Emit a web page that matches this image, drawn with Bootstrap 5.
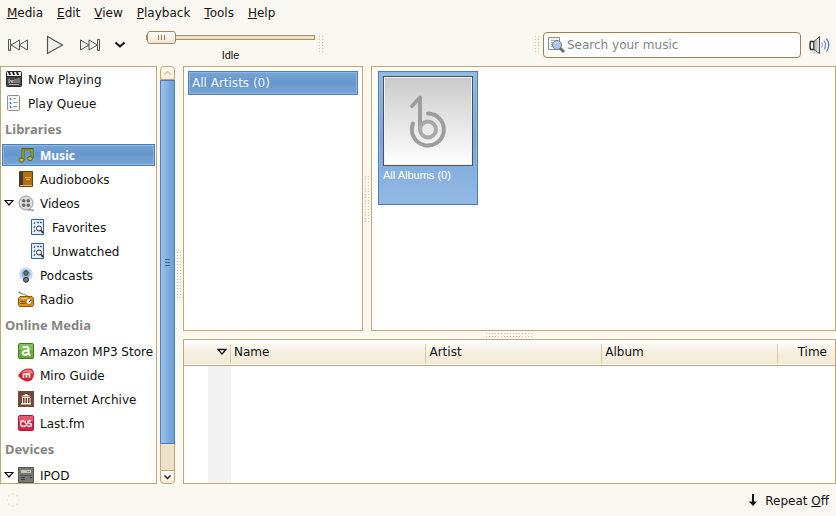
<!DOCTYPE html>
<html lang="en">
<head>
<meta charset="utf-8">
<meta name="viewport" content="width=device-width, initial-scale=1">
<title>Music</title>
<link href="https://cdn.jsdelivr.net/npm/bootstrap@5.3.0/dist/css/bootstrap.min.css" rel="stylesheet">
<style>
:root{--edge:#c0a870;--blue:#4a7fb8;--sel:linear-gradient(#7aa5d6,#6496cc 45%,#7aa5d6)}
body{font:12px/18px "DejaVu Sans","Noto Sans",sans-serif;background:#fbf8f1;color:#111}
svg{display:block;flex:none}
button,.src{border:0;background:none;padding:0;color:inherit;text-decoration:none;font:inherit}
.menus{height:26px;gap:14px;padding-left:7px}
.tools{height:40px;padding-right:6px}
.transport{gap:13px;padding-left:7px;height:38px}
.seekbox{width:173px;padding-top:5px}
.seek{appearance:none;width:100%;height:13px;background:none;margin:0;display:block}
.seek::-webkit-slider-runnable-track{height:5px;border:1px solid #a8925c;background:#ede3cb}
.seek::-webkit-slider-thumb{appearance:none;width:29px;height:13px;margin-top:-5px;border:1px solid #a08c5c;border-radius:3px;background:linear-gradient(90deg,#8a7a50 1px,transparent 1px 3px,#8a7a50 3px 4px,transparent 4px 6px,#8a7a50 6px 7px) center/7px 5px no-repeat,linear-gradient(#fff,#f0e8d3)}
.tiny{font:11px/14px "Liberation Sans",Arial,sans-serif}
.dots{background:conic-gradient(from 270deg at 1px 1px,#d2c299 90deg,transparent 0) 0 0/3px 3px;flex:none}
.dots-v{width:5px;height:46px}
.dots-s{width:4px;height:17px;margin-top:10px}
.dots-h{width:47px;height:4px}
.find{width:258px;height:26px;border:1px solid #9c8350;border-radius:4px;background:#fff;padding:0 3px;gap:2px;margin-top:6px}
.find input{border:0;outline:0;background:none;padding:0;min-width:0;height:24px;flex:1}
.find input::placeholder{color:#858585;opacity:1}
.vol{margin:9px 0 0 8px}
.pane{border:1px solid var(--edge);background:#fff}
.side{width:157px;flex:none}
.src{display:flex;align-items:center;height:24px;padding-left:5px;gap:6px;white-space:nowrap}
.src span,.status span{padding-top:2px}
.lv1{padding-left:17px}
.lv2{padding-left:29px}
.parent{padding-left:3px;gap:4px}
.parent span{padding-left:2px}
.group-title{font:700 13px/28px "Noto Sans","Open Sans",sans-serif;color:#85857f;padding-left:4px;margin:0}
.chosen{background:var(--sel);border:1px solid var(--blue);box-shadow:inset 0 0 0 1px #8fb6e0;color:#fff}
.src.chosen{height:22px;margin:1px;padding-left:15px;font-family:"Noto Sans","Open Sans",sans-serif;font-weight:700}
.sbar{width:15px;margin-left:3px;flex:none}
.sbar button{height:14px;border:1px solid var(--edge);background:linear-gradient(#fff,#f4edda);display:grid;place-items:center}
.sbar .up{border-radius:4px 4px 0 0}
.sbar .down{border-radius:0 0 4px 4px}
.slab{flex:364 0 0;border:1px solid var(--blue);background:linear-gradient(90deg,#9dc2ea,#7ba8da 70%,#6f9fd6);display:grid;place-items:center}
.slab i{width:5px;height:7px;background:linear-gradient(#3f6694 1px,transparent 1px 3px,#3f6694 3px 4px,transparent 4px 6px,#3f6694 6px)}
.trough{flex:26 0 0;background:#ece2ca;border:solid var(--edge);border-width:0 1px}
.gut-v{width:8px;flex:none}
.gut-h{height:8px;flex:none}
.artists{flex:0 0 180px;padding:4px}
.artist{height:24px;padding:0 3px;color:#f0f5fb}
.albums{padding:4px 6px}
.album{width:100px;height:134px;padding:4px;background:linear-gradient(#94b9e5,#78a6d9 50%,#94b9e5)}
.album .tiny{padding-top:2px}
.cover{border:1px solid #505050;box-shadow:inset 0 0 0 1px #f4f4f4;width:90px;height:90px;background:linear-gradient(#cacaca,#fff)}
.upper{flex:265 0 0}
.lower{flex:143 0 0}
.tracks{width:100%;height:100%;table-layout:fixed;border-collapse:collapse}
.tracks thead tr{height:25px;background:linear-gradient(#fff,#f5eddc 60%,#f4ecda);border-bottom:1px solid var(--edge)}
.tracks th{font-weight:400;padding:0 3px;background:linear-gradient(#d9cba6,#d9cba6) right 4px/1px 19px no-repeat}
.tracks th.plain{background:none}
.tracks th.sort{padding:0 0 0 9px}
.tracks td{padding:0}
.c-a{width:24px}.c-b{width:23px}.c-m{width:27%}.c-t{width:57px}
.mark-col{background:#f2f2f2}
.status{height:32px;padding:0 7px 0 5px}
</style>
<script src="https://cdn.jsdelivr.net/npm/bootstrap@5.3.0/dist/js/bootstrap.bundle.min.js"></script>
</head>
<body class="vh-100 d-flex flex-column overflow-hidden">
<nav class="menus d-flex align-items-center flex-shrink-0" aria-label="Main menu">
<button><u>M</u>edia</button><button><u>E</u>dit</button><button><u>V</u>iew</button><button><u>P</u>layback</button><button><u>T</u>ools</button><button><u>H</u>elp</button>
</nav>
<header class="tools d-flex align-items-start flex-shrink-0">
<div class="transport d-flex align-items-center">
<button aria-label="Previous"><svg width="22" height="16" fill="#f6f5f1" stroke="#505550"><path d="M1.500 2.500h2v11h-2zM12.500 3v10L4 8zM20.500 3v10L12 8z"/></svg></button>
<button aria-label="Play"><svg width="24" height="20" fill="#f3f2ee" stroke="#505550" stroke-width="1.200"><path d="M5.500 1.500v17l15-8.500z"/></svg></button>
<button aria-label="Next"><svg width="22" height="16" fill="#f6f5f1" stroke="#505550"><path d="M18.500 2.500h2v11h-2zM1.500 3v10L10 8zM10 3v10L18.500 8z"/></svg></button>
<button aria-label="Next options"><svg width="12" height="8" fill="none" stroke="#111" stroke-width="2"><path d="M1.500 1.500L6 5.500l4.500-4"/></svg></button>
</div>
<div class="seekbox ms-3 me-1 ps-1">
<input class="seek" id="seek" type="range" min="0" max="100" value="0">
<label class="tiny d-block text-center pt-1" for="seek">Idle</label>
</div>
<div class="dots dots-s"></div>
<div class="dots dots-s ms-auto me-1"></div>
<div class="find d-flex align-items-center">
<label for="q" aria-label="Search"><svg width="18" height="18"><path d="M1.500 1.500h11v12h-11z" fill="#f1f1ee" stroke="#90918c"/><path d="M4 4.500h6M4 6.500h3M4 8.500h3M4 10.500h3" stroke="#b9bab5"/><circle cx="10" cy="9" r="4.500" fill="#a9c8ec" stroke="#6e7f94"/><path d="M7.500 8q2-3 4-1" stroke="#e4f0fc" fill="none"/><path d="M13 12l4 4" stroke="#70726d" stroke-width="3"/></svg></label>
<input id="q" type="text" aria-label="Search" placeholder="Search your music">
</div>
<button class="vol" aria-label="Volume"><svg width="21" height="20"><ellipse cx="7" cy="17.500" rx="6" ry="1.500" fill="#deddd8"/><path d="M1.500 6.500H5v8H1.500q-1-4 0-8z" fill="#eee" stroke="#303330" stroke-width="1.500"/><path d="M5 6.500L10.500 1.500v17L5 14.500z" fill="#c4c6c2" stroke="#4c504c"/><path d="M9 4v13" stroke="#f2f2f2"/><g fill="none" stroke-width="1.300"><path d="M12.500 7.500q2 2.500 0 5" stroke="#a8b9da"/><path d="M15 5.500q3 4.500 0 9" stroke="#7896ce"/><path d="M17.500 3.500q4.500 6.500 0 13" stroke="#4c78c4"/></g></svg></button>
</header>
<main class="d-flex flex-grow-1 overflow-hidden">
<nav class="side pane overflow-hidden" aria-label="Sources">
<a class="src" href="#"><svg width="16" height="16"><rect x=".5" y=".5" width="15" height="15" rx="1" fill="#444642" stroke="#292a28"/><path d="M1 1h14v4H1z" fill="#efefeb"/><path d="M2 1h2l1 3H3zM6 1h2l1 3H7zM10 1h2l1 3h-2zM1 5h14v1H1z" fill="#222"/><path d="M3 8v4l2-3 1 3 1-3v3m2-4v4m2-4v4m2-5v5M3 13.500h10" fill="none" stroke="#c9cac6" stroke-width=".8"/></svg><span>Now Playing</span></a>
<a class="src" href="#"><svg width="16" height="16"><rect x="1.500" y=".5" width="12" height="15" rx="1" fill="#f3f5f6" stroke="#8b8e89"/><path d="M4 4.500l1-1m-1 5l1-1m-1 5l1-1" stroke="#3d70b0" stroke-width="2"/><path d="M7.500 3.500H10M7.500 7.500h4M7.500 11.500H11" stroke="#8998aa"/></svg><span>Play Queue</span></a>
<h2 class="group-title">Libraries</h2>
<a class="src chosen" href="#" aria-current="page"><svg width="16" height="16"><path d="M5 13V2.500h9V11" fill="none" stroke="#53620f" stroke-width="3"/><path d="M5 13V3h9v8" fill="none" stroke="#a9b944" stroke-width="1.200"/><ellipse cx="3.500" cy="13" rx="2.700" ry="2" fill="#b4c24c" stroke="#53620f"/><ellipse cx="12" cy="11.500" rx="2.500" ry="2" fill="#b4c24c" stroke="#53620f"/></svg><span>Music</span></a>
<a class="src lv1" href="#"><svg width="16" height="16"><path d="M1.500.5h13v15h-13z" fill="#b1700d" stroke="#63400d"/><path d="M1 1h4v14H1z" fill="#42372b"/><path d="M7 6.500h6M8 8.500h4" stroke="#e5ad55"/><path d="M2 14.500h12" stroke="#dcc18a"/></svg><span>Audiobooks</span></a>
<a class="src parent" href="#"><svg width="10" height="8"><path d="M1 1.500h8L5 6z" fill="#fff" stroke="#111" stroke-width="1.200"/></svg><svg width="16" height="16"><circle cx="8" cy="8" r="7" fill="#deded9" stroke="#979994"/><g fill="#686a67"><circle cx="5.700" cy="5.700" r="1.800"/><circle cx="10.300" cy="5.700" r="1.800"/><circle cx="5.700" cy="10.300" r="1.800"/><circle cx="10.300" cy="10.300" r="1.800"/></g><path d="M10 15q4-1 6 1" stroke="#969994" stroke-width="1.500" fill="none"/></svg><span>Videos</span></a>
<a class="src lv2" href="#"><svg width="16" height="16"><path d="M1.500.5h12v15h-12z" fill="#e7f0fa" stroke="#315f9d"/><path d="M4 5l1-2M4 9l1-2M4 13l1-2M7 3.500h2M10 3.500h2" stroke="#3c6eaa" stroke-width="1.300"/><circle cx="9" cy="9.500" r="2.500" fill="#f7f7f7" stroke="#333"/><path d="M11 11.500l2 2.500" stroke="#222" stroke-width="1.500"/></svg><span>Favorites</span></a>
<a class="src lv2" href="#"><svg width="16" height="16"><path d="M1.500.5h12v15h-12z" fill="#e7f0fa" stroke="#315f9d"/><path d="M4 5l1-2M4 9l1-2M4 13l1-2M7 3.500h2M10 3.500h2" stroke="#3c6eaa" stroke-width="1.300"/><circle cx="9" cy="9.500" r="2.500" fill="#f7f7f7" stroke="#333"/><path d="M11 11.500l2 2.500" stroke="#222" stroke-width="1.500"/></svg><span>Unwatched</span></a>
<a class="src lv1" href="#"><svg width="16" height="16"><circle cx="8" cy="7" r="6.800" fill="#c5dbf1"/><circle cx="8" cy="7" r="4.500" fill="#8eb5df"/><circle cx="8" cy="6" r="2.200" fill="#777" stroke="#303336"/><circle cx="8" cy="12.800" r="2.500" fill="#777" stroke="#303336"/></svg><span>Podcasts</span></a>
<a class="src lv1" href="#"><svg width="16" height="16"><path d="M1 1.500l9 3.500" stroke="#81837e"/><circle cx="1.500" cy="1.500" r="1" fill="#777"/><path d="M2 5.500h12l1.500 2v6l-1 2h-13l-1-2v-6z" fill="#dc941f" stroke="#8b5507"/><path d="M3 7.500h10" stroke="#f5d68d"/><path d="M2.500 10.500h5M2.500 12.500h5" stroke="#784909"/><circle cx="11" cy="10.500" r="3" fill="#faf1dc" stroke="#a96c14"/><path d="M11 11l2-2" stroke="#444"/></svg><span>Radio</span></a>
<h2 class="group-title">Online Media</h2>
<a class="src lv1" href="#"><svg width="16" height="16"><rect x=".5" y=".5" width="15" height="15" rx="1.500" fill="#64ad3c" stroke="#3c7e1d"/><path d="M1 1h14v6H1z" fill="#91ca6e" opacity=".6"/><path d="M4.500 4.500q6-2 6 1.500v4q0 2 2 2M10.500 7.500q-6 0-6 2.500 1 3 5 1" fill="none" stroke="#fff" stroke-width="2"/></svg><span>Amazon MP3 Store</span></a>
<a class="src lv1" href="#"><svg width="16" height="16"><path d="M0 9Q4 1 11 1.500q5-.5 5 5.500-.500 8-8 7.500Q3 13 0 9z" fill="#cf2834"/><path d="M3 6q5-5 10-3 2 1 2 4Q8 4 3 6z" fill="#ef777a"/><path d="M5.500 11V7h6v4M8.500 7v4" fill="none" stroke="#fff" stroke-width="1.500"/></svg><span>Miro Guide</span></a>
<a class="src lv1" href="#"><svg width="16" height="16"><path d="M0 0h16v16H0z" fill="#704b38"/><path d="M3 5.500L8 3l5 2.500zM3 12h10v1.500H3z" fill="#f4eee7"/><path d="M4 6.500h8M4.500 7v5M7 7v5M9.500 7v5M12 7v5" stroke="#eee3d8"/></svg><span>Internet Archive</span></a>
<a class="src lv1" href="#"><svg width="16" height="16"><rect x=".5" y=".5" width="15" height="15" rx="1.500" fill="#d52546" stroke="#b91535"/><path d="M1 1h14v5H1z" fill="#e97186" opacity=".7"/><path d="M8 10.500q-1 1-3 1-2.500-.5-2.500-3T5 6q2 0 3 2.500t3 3q2.500 0 2.500-1.500T11.500 8.500t-2-1.200T11.500 6h1.500" fill="none" stroke="#fff" stroke-width="1.300"/></svg><span>Last.fm</span></a>
<h2 class="group-title">Devices</h2>
<a class="src parent" href="#"><svg width="10" height="8"><path d="M1 1.500h8L5 6z" fill="#fff" stroke="#111" stroke-width="1.200"/></svg><svg width="16" height="16"><path d="M.5.500h15v15H.5z" fill="#777974" stroke="#535550"/><path d="M3 3h10v3H3z" fill="#c4caac"/><path d="M9 4.500h3" stroke="#849167"/><path d="M2 8.500h12" stroke="#555"/><path d="M3 10.500h4m5 0h2M3 12.500h4" stroke="#3c3e3b"/></svg><span>IPOD</span></a>
</nav>
<div class="sbar d-flex flex-column">
<button class="up" aria-label="Scroll up"><svg width="9" height="6" fill="none" stroke="#d7c79e" stroke-width="1.500"><path d="M1.500 4.500l3-3 3 3"/></svg></button>
<div class="slab"><i></i></div><div class="trough"></div>
<button class="down" aria-label="Scroll down"><svg width="9" height="6" fill="none" stroke="#222" stroke-width="1.500"><path d="M1.500 1.500l3 3 3-3"/></svg></button>
</div>
<div class="gut-v d-flex align-items-center justify-content-center"><div class="dots dots-v"></div></div>
<div class="d-flex flex-column flex-grow-1 overflow-hidden">
<div class="upper d-flex">
<section class="artists pane" aria-label="Artists"><button class="artist chosen w-100 text-start">All Artists (0)</button></section>
<div class="gut-v d-flex align-items-center justify-content-center"><div class="dots dots-v"></div></div>
<section class="albums pane flex-grow-1" aria-label="Albums">
<button class="album chosen d-flex flex-column align-items-start">
<span class="cover"><svg width="88" height="88" fill="none" stroke-linecap="round" stroke-width="4"><path d="M28 29l8-8.500V52" stroke="#9d9d9d" stroke-linejoin="round"/><circle cx="44" cy="52.500" r="8" stroke="#a9a9a9"/><path d="M44 36.500a16 16 0 1 1-15 10" stroke="#9d9d9d"/></svg></span>
<span class="tiny">All Albums (0)</span></button>
</section>
</div>
<div class="gut-h d-flex align-items-center justify-content-center"><div class="dots dots-h"></div></div>
<section class="lower pane overflow-hidden" aria-label="Tracks">
<table class="tracks">
<colgroup><col class="c-a"><col class="c-b"><col><col class="c-m"><col class="c-m"><col class="c-t"></colgroup>
<thead><tr><th class="plain"></th><th class="sort" aria-label="Sort"><svg width="10" height="8"><path d="M1 1.500h8L5 6z" fill="#fff" stroke="#111" stroke-width="1.300"/></svg></th><th>Name</th><th>Artist</th><th>Album</th><th class="plain text-end pe-2">Time</th></tr></thead>
<tbody><tr><td></td><td class="mark-col"></td><td></td><td></td><td></td><td></td></tr></tbody>
</table>
</section>
</div>
</main>
<footer class="status d-flex align-items-center justify-content-between flex-shrink-0">
<svg width="16" height="16" fill="#e9e6df"><circle cx="8" cy="2" r="1"/><circle cx="12" cy="4" r="1"/><circle cx="14" cy="8" r="1"/><circle cx="12" cy="12" r="1"/><circle cx="8" cy="14" r="1"/><circle cx="4" cy="12" r="1"/><circle cx="2" cy="8" r="1"/><circle cx="4" cy="4" r="1"/></svg>
<button class="d-flex align-items-center gap-2"><svg width="8" height="14"><path d="M4 1v9" stroke="#111" stroke-width="2"/><path d="M0 8.500h8L4 13z" fill="#111"/></svg><span>Repeat <u>O</u>ff</span></button>
</footer>
</body>
</html>
